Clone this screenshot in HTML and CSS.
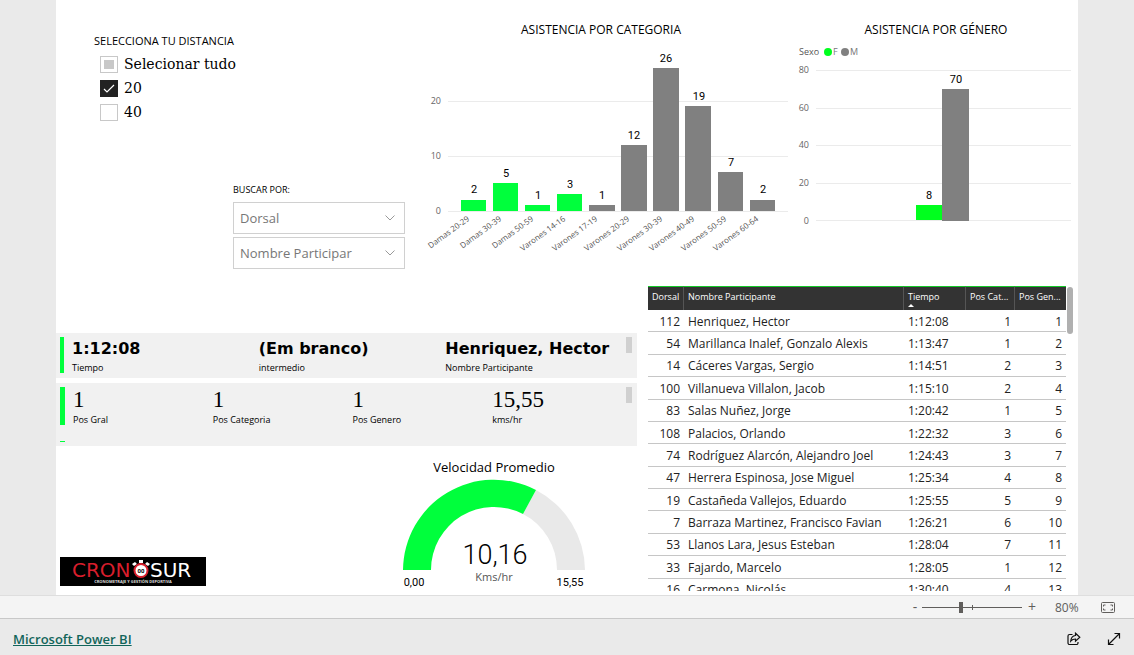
FILE: index.html
```html
<!DOCTYPE html>
<html lang="es">
<head>
<meta charset="utf-8">
<meta name="viewport" content="width=device-width, initial-scale=1">
<title>Microsoft Power BI</title>
<link rel="stylesheet" href="styles.css">
</head>
<body>
<main class="report">
  <section class="top">
    <div class="filters">
      <fieldset class="distance">
        <legend>SELECCIONA TU DISTANCIA</legend>
        <label class="option"><input type="checkbox" class="box partial"><span>Selecionar tudo</span></label>
        <label class="option"><input type="checkbox" class="box" checked><span>20</span></label>
        <label class="option"><input type="checkbox" class="box"><span>40</span></label>
      </fieldset>
      <div class="search">
        <h2 class="search-title">BUSCAR POR:</h2>
        <select class="drop" aria-label="Dorsal"><option>Dorsal</option></select>
        <select class="drop" aria-label="Nombre Participante"><option>Nombre Participar</option></select>
      </div>
    </div>

    <div class="chart chart-category">
      <h2 class="chart-title">ASISTENCIA POR CATEGORIA</h2>
      <svg class="plot" viewBox="420 44 374 226" role="img" aria-label="Asistencia por categoria">
        <path class="grid" d="M448 101.500H788M448 156.500H788M448 211.500H788"/>
        <g class="axis end"><text x="441" y="104">20</text><text x="441" y="159">10</text><text x="441" y="214">0</text></g>
        <g class="female">
          <rect x="461" y="200" width="25" height="11"/><rect x="493" y="183" width="25" height="28"/>
          <rect x="525" y="205" width="25" height="6"/><rect x="557" y="194" width="25" height="17"/>
        </g>
        <g class="male">
          <rect x="589" y="205" width="26" height="6"/><rect x="621" y="145" width="26" height="66"/>
          <rect x="653" y="68" width="26" height="143"/><rect x="685" y="106" width="26" height="105"/>
          <rect x="718" y="172" width="25" height="39"/><rect x="750" y="200" width="25" height="11"/>
        </g>
        <g class="value">
          <text x="474" y="193">2</text><text x="506" y="177">5</text><text x="538" y="199">1</text><text x="570" y="188">3</text>
          <text x="602" y="199">1</text><text x="634" y="139">12</text><text x="666" y="62">26</text><text x="699" y="100">19</text>
          <text x="731" y="166">7</text><text x="763" y="193">2</text>
        </g>
        <g class="names end">
          <text transform="translate(470 220) rotate(-36)">Damas 20-29</text>
          <text transform="translate(502 220) rotate(-36)">Damas 30-39</text>
          <text transform="translate(534 220) rotate(-36)">Damas 50-59</text>
          <text transform="translate(566 220) rotate(-36)">Varones 14-16</text>
          <text transform="translate(598 220) rotate(-36)">Varones 17-19</text>
          <text transform="translate(630 220) rotate(-36)">Varones 20-29</text>
          <text transform="translate(663 220) rotate(-36)">Varones 30-39</text>
          <text transform="translate(695 220) rotate(-36)">Varones 40-49</text>
          <text transform="translate(727 220) rotate(-36)">Varones 50-59</text>
          <text transform="translate(759 220) rotate(-36)">Varones 60-64</text>
        </g>
      </svg>
    </div>

    <div class="chart">
      <h2 class="chart-title">ASISTENCIA POR GÉNERO</h2>
      <svg class="plot" viewBox="794 44 284 226" role="img" aria-label="Asistencia por género">
        <g class="legend"><text class="legend-name" x="799" y="55">Sexo</text><text x="833" y="55">F</text><text x="850" y="55">M</text></g>
        <circle class="female-alt" cx="828" cy="52" r="4"/><circle class="male" cx="845" cy="52" r="4"/>
        <path class="grid" d="M816 70.500H1071M816 108.500H1071M816 145.500H1071M816 183.500H1071M816 220.500H1071"/>
        <g class="axis end"><text x="809" y="73">80</text><text x="809" y="111">60</text><text x="809" y="148">40</text><text x="809" y="186">20</text><text x="809" y="224">0</text></g>
        <rect class="female-alt" x="916" y="205" width="26" height="15"/>
        <rect class="male" x="942" y="89" width="27" height="132"/>
        <g class="value"><text x="929" y="199">8</text><text x="956" y="83">70</text></g>
      </svg>
    </div>
  </section>

  <section class="bottom">
    <div class="summary">
      <div class="card">
        <span class="accent"></span>
        <dl class="facts facts-bold">
          <div><dd>1:12:08</dd><dt>Tiempo</dt></div>
          <div><dd>(Em branco)</dd><dt>intermedio</dt></div>
          <div><dd>Henriquez, Hector</dd><dt>Nombre Participante</dt></div>
        </dl>
        <span class="thumb"></span>
      </div>
      <div class="card card-tall">
        <span class="accent accent-more"></span>
        <dl class="facts facts-serif">
          <div><dd>1</dd><dt>Pos Gral</dt></div>
          <div><dd>1</dd><dt>Pos Categoria</dt></div>
          <div><dd>1</dd><dt>Pos Genero</dt></div>
          <div><dd>15,55</dd><dt>kms/hr</dt></div>
        </dl>
        <span class="thumb"></span>
      </div>
      <div class="lower">
        <svg class="logo" viewBox="0 0 146 29" role="img" aria-label="Cronosur">
          <rect class="logo-back" width="146" height="29"/>
          <text class="logo-red" x="12" y="20">CRON</text>
          <text class="logo-white" x="90" y="20">SUR</text>
          <path class="logo-knob" d="M79 3h4v3h-4zM72 7l3-2 2 2-3 2zM90 7l-3-2-2 2 3 2z"/>
          <circle class="logo-ring" cx="81" cy="13.500" r="6.500"/>
          <text class="logo-clock" x="81" y="16">00</text>
          <text class="logo-tag" x="73" y="26">CRONOMETRAJE Y GESTIÓN DEPORTIVA</text>
        </svg>
        <div class="gauge">
          <h2 class="gauge-title">Velocidad Promedio</h2>
          <svg class="gauge-plot" viewBox="393 477 200 114" role="img" aria-label="Velocidad Promedio 10,16 Kms/hr">
            <path class="gauge-rest" d="M535 490A91 91 0 0 1 584 570H556A63 63 0 0 0 522 514Z"/>
            <path class="gauge-fill" d="M402 570A91 91 0 0 1 535 490L522 514A63 63 0 0 0 430 570Z"/>
            <text class="gauge-value" x="494" y="564">10,16</text>
            <text class="gauge-unit" x="493" y="581">Kms/hr</text>
            <text class="gauge-limit" x="413" y="586">0,00</text>
            <text class="gauge-limit" x="569" y="586">15,55</text>
          </svg>
        </div>
      </div>
    </div>

    <div class="results">
      <div class="table-clip">
        <table>
          <colgroup><col class="c-num"><col class="c-name"><col class="c-time"><col class="c-cat"><col class="c-gen"></colgroup>
          <thead><tr><th>Dorsal</th><th>Nombre Participante</th><th class="sorted">Tiempo</th><th>Pos Cat...</th><th>Pos Gen...</th></tr></thead>
          <tbody>
            <tr><td>112</td><td>Henriquez, Hector</td><td>1:12:08</td><td>1</td><td>1</td></tr>
            <tr><td>54</td><td>Marillanca Inalef, Gonzalo Alexis</td><td>1:13:47</td><td>1</td><td>2</td></tr>
            <tr><td>14</td><td>Cáceres Vargas, Sergio</td><td>1:14:51</td><td>2</td><td>3</td></tr>
            <tr><td>100</td><td>Villanueva Villalon, Jacob</td><td>1:15:10</td><td>2</td><td>4</td></tr>
            <tr><td>83</td><td>Salas Nuñez, Jorge</td><td>1:20:42</td><td>1</td><td>5</td></tr>
            <tr><td>108</td><td>Palacios, Orlando</td><td>1:22:32</td><td>3</td><td>6</td></tr>
            <tr><td>74</td><td>Rodríguez Alarcón, Alejandro Joel</td><td>1:24:43</td><td>3</td><td>7</td></tr>
            <tr><td>47</td><td>Herrera Espinosa, Jose Miguel</td><td>1:25:34</td><td>4</td><td>8</td></tr>
            <tr><td>19</td><td>Castañeda Vallejos, Eduardo</td><td>1:25:55</td><td>5</td><td>9</td></tr>
            <tr><td>7</td><td>Barraza Martinez, Francisco Favian</td><td>1:26:21</td><td>6</td><td>10</td></tr>
            <tr><td>53</td><td>Llanos Lara, Jesus Esteban</td><td>1:28:04</td><td>7</td><td>11</td></tr>
            <tr><td>33</td><td>Fajardo, Marcelo</td><td>1:28:05</td><td>1</td><td>12</td></tr>
            <tr><td>16</td><td>Carmona, Nicolás</td><td>1:30:40</td><td>4</td><td>13</td></tr>
          </tbody>
        </table>
      </div>
      <span class="scroll"></span>
    </div>
  </section>
</main>

<div class="zoombar">
  <button class="step" type="button" aria-label="Reducir">-</button>
  <input class="slider" type="range" min="0" max="100" value="39" aria-label="Zoom">
  <button class="step" type="button" aria-label="Ampliar">+</button>
  <span class="percent">80%</span>
  <button class="icon" type="button" aria-label="Ajustar a la página">
    <svg width="14" height="11" viewBox="0 0 14 11"><rect x=".5" y=".5" width="13" height="10" rx="1"/><path d="M2.500 4.500v-1.500h2M9.500 3h2v1.500M2.500 6.500v1.500h2M9.500 8h2v-1.500"/></svg>
  </button>
</div>

<footer class="footer">
  <a class="brand" href="#">Microsoft Power BI</a>
  <div class="actions">
    <button class="icon dark" type="button" aria-label="Compartir">
      <svg width="14" height="14" viewBox="0 0 14 14"><path d="M5.500 2.500H2.500a1.500 1.500 0 0 0-1.500 1.500v7a1.500 1.500 0 0 0 1.500 1.500h7a1.500 1.500 0 0 0 1.500-1.500V10"/><path d="M8.500 1.200l4.300 4-4.300 4V7c-2 0-3.500.6-4.800 2.200C4 6 5.500 3.800 8.500 3.500z"/></svg>
    </button>
    <button class="icon dark" type="button" aria-label="Pantalla completa">
      <svg width="14" height="14" viewBox="0 0 14 14"><path d="M1.500 12.500l11-11M7.500 1.500h5v5M1.500 7.500v5h5"/></svg>
    </button>
  </div>
</footer>
</body>
</html>
```
FILE: styles.css
```css
* { box-sizing: border-box; }

body {
  margin: 0;
  min-height: 100vh;
  display: flex;
  flex-direction: column;
  background: #eaeaea;
  color: #000;
  font-family: "Segoe UI", "Open Sans", "Noto Sans", sans-serif;
  font-size: 12px;
}

h2, dl, dd, fieldset { margin: 0; padding: 0; border: 0; font-weight: 400; }
button { border: 0; padding: 0; background: none; font: inherit; color: inherit; }

.report { margin: 0 56px; background: #fff; }
.top { display: grid; grid-template-columns: 364fr 374fr 284fr; }
.bottom { display: grid; grid-template-columns: 592fr 430fr; margin-top: 16px; }

/* Filters */
.filters { padding: 32px 15px 0 38px; }
.distance legend { padding: 0; font-size: 11px; line-height: 18px; }
.option { display: flex; align-items: center; gap: 6px; height: 24px; margin-left: 6px; font: 14px "DejaVu Serif", serif; }
.distance legend + .option { margin-top: 2px; }
.box {
  appearance: none;
  width: 18px;
  height: 17px;
  margin: 0;
  border: 1px solid #c8c8c8;
  background: #fff;
}
.box:checked {
  border-color: #222;
  background: #222 url("data:image/svg+xml,%3Csvg xmlns='http://www.w3.org/2000/svg' viewBox='0 0 16 15'%3E%3Cpath d='M3 8l3 3 7-7' fill='none' stroke='white' stroke-width='1.2'/%3E%3C/svg%3E") center / 100% 100%;
}
.partial { padding: 3px; background: #c8c8c8 content-box; }
.search { display: flex; flex-direction: column; gap: 3px; width: 172px; margin: 58px 0 0 auto; }
.search-title { font-size: 9px; line-height: 16px; margin-bottom: 1px; }
.drop {
  appearance: none;
  width: 100%;
  height: 32px;
  padding: 0 6px;
  border: 1px solid #d0d0d0;
  border-radius: 0;
  color: #777;
  font: 13px "Segoe UI", "Open Sans", sans-serif;
  background: #fff url("data:image/svg+xml,%3Csvg xmlns='http://www.w3.org/2000/svg' viewBox='0 0 10 6'%3E%3Cpath d='M.5.5L5 5 9.500.5' fill='none' stroke='%23999'/%3E%3C/svg%3E") right 9px center / 10px 6px no-repeat;
}

/* Charts */
.chart-title { padding-top: 21px; height: 44px; text-align: center; font-size: 12px; line-height: 18px; }
.chart-category .chart-title { padding-right: 12px; }
.plot, .gauge-plot { display: block; width: 100%; }
.grid { stroke: #ebebeb; fill: none; }
.axis { font-size: 9px; fill: #666; }
.names { font-size: 8px; fill: #555; }
.end { text-anchor: end; }
.legend { font-size: 9px; fill: #777; }
.legend-name { fill: #555; }
.female { fill: #00ff3c; }
.female-alt { fill: #00ff1e; }
.male { fill: #808080; }
.value { font: 11px Roboto, sans-serif; text-anchor: middle; }

/* Summary cards */
.summary { padding: 47px 11px 0 0; }
.card { display: flex; height: 45px; padding: 4px 5px 5px 4px; background: #f1f1f1; }
.card-tall { height: 63px; margin-top: 5px; }
.accent { flex: none; width: 4px; background: #00ff3c; }
.accent-more { position: relative; width: 5px; height: 38px; }
.accent-more::after { content: ""; position: absolute; top: 54px; left: 0; width: 5px; height: 1px; background: #00ff3c; }
.facts { flex: 1; display: grid; margin-right: -6px; padding-left: 8px; }
.facts > div { display: flex; flex-direction: column; white-space: nowrap; }
.facts dt { font-size: 9px; line-height: 14px; }
.facts-bold { grid-template-columns: repeat(3, 1fr); }
.facts-bold dd { font: bold 16px/24px "Arial Black", "DejaVu Sans", sans-serif; }
.facts-serif { grid-template-columns: repeat(4, 1fr); }
.facts-serif dd { font: 23px/26px "Liberation Serif", serif; }
.thumb { flex: none; width: 6px; height: 16px; background: #d0d0d0; }

/* Logo and gauge */
.lower { display: flex; align-items: flex-end; justify-content: space-between; padding: 12px 43px 4px 4px; }
.logo { width: 146px; margin-bottom: 5px; }
.logo-back { fill: #000; }
.logo-red, .logo-white { font: 20px "DejaVu Sans", sans-serif; }
.logo-red { fill: #d81e2c; }
.logo-white { fill: #fff; }
.logo-knob { fill: #fff; }
.logo-ring { fill: #fff; stroke: #d81e2c; stroke-width: 2; }
.logo-clock { font: bold 6px Roboto, sans-serif; text-anchor: middle; }
.logo-tag { font: bold 4px "Open Sans", sans-serif; fill: #ddd; text-anchor: middle; }
.gauge { width: 200px; }
.gauge-title { text-align: center; font-size: 13px; line-height: 19px; }
.gauge-fill { fill: #00ff3c; }
.gauge-rest { fill: #e9e9e9; }
.gauge-value { font: 300 27px Roboto, sans-serif; text-anchor: middle; }
.gauge-unit { font-size: 11px; fill: #555; text-anchor: middle; }
.gauge-limit { font: 11px Roboto, sans-serif; text-anchor: middle; }

/* Results table */
.results { display: flex; align-items: flex-start; gap: 1px; padding-right: 5px; }
.table-clip { flex: 1; height: 305px; overflow: hidden; }
.scroll { width: 6px; height: 47px; margin-top: 1px; border-radius: 3px; background: #b0b0b0; }
table { width: 100%; height: 315px; table-layout: fixed; border-collapse: separate; border-spacing: 0; }
.c-num { width: 36px; }
.c-time { width: 62px; }
.c-cat { width: 49px; }
.c-gen { width: 51px; }
th {
  height: 24px;
  padding: 0 0 4px 4px;
  border-top: 1px solid #14c828;
  border-right: 1px solid #555;
  background: #333;
  color: #fff;
  font-size: 9px;
  font-weight: 500;
  text-align: left;
  white-space: nowrap;
}
th:last-child { border-right: 0; }
.sorted { position: relative; }
.sorted::after { content: ""; position: absolute; left: 4px; bottom: 3px; border: 3px solid transparent; border-top: 0; border-bottom-color: #fff; }
td { padding: 2px 4px 0; border-bottom: 1px solid #c6c6c6; color: #222; font-size: 12px; line-height: 16px; text-align: right; white-space: nowrap; }
td:nth-child(2), td:nth-child(3) { text-align: left; }

/* Zoom bar and footer */
.zoombar {
  display: flex;
  align-items: center;
  justify-content: flex-end;
  height: 23px;
  padding-right: 19px;
  border-top: 1px solid #dedede;
  background: #f4f4f4;
  color: #605e5c;
}
.step { width: 14px; height: 20px; font-size: 14px; line-height: 20px; }
.slider {
  appearance: none;
  width: 100px;
  height: 11px;
  margin: 0 3px 0 0;
  background:
    linear-gradient(#605e5c, #605e5c) 50px center / 1px 5px no-repeat,
    linear-gradient(#605e5c, #605e5c) center / 100% 1px no-repeat;
}
.slider::-webkit-slider-thumb { appearance: none; width: 4px; height: 11px; background: #605e5c; }
.percent { width: 62px; padding-left: 16px; }
.icon { display: flex; }
.icon svg { fill: none; stroke: #605e5c; }
.dark svg { stroke: #111; stroke-width: 1.2; }
.footer {
  flex: 1;
  display: flex;
  align-items: center;
  justify-content: space-between;
  min-height: 37px;
  padding: 4px 13px 0;
  border-top: 1px solid #c8c8c8;
}
.brand { color: #12655a; font-size: 13px; font-weight: 600; }
.actions { display: flex; gap: 26px; }
```
